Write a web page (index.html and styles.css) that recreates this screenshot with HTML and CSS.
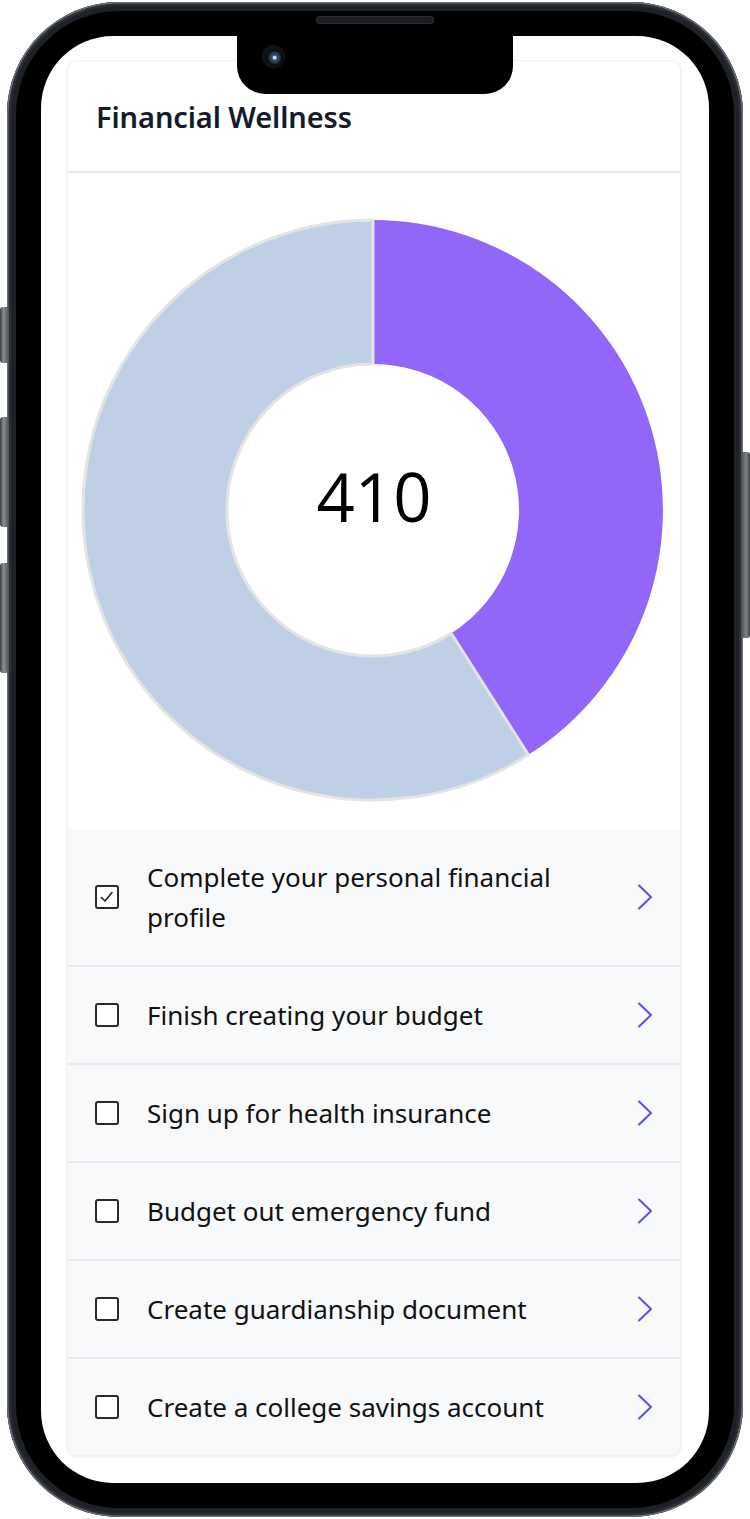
FILE: index.html
```html
<!DOCTYPE html>
<html lang="en">
<head>
<meta charset="utf-8">
<title>Financial Wellness</title>
<link rel="stylesheet" href="styles.css">
</head>
<body>
<div class="phone">
  <span class="btn btn-l1"></span>
  <span class="btn btn-l2"></span>
  <span class="btn btn-l3"></span>
  <span class="btn btn-r1"></span>
  <span class="speaker"></span>
  <div class="bezel">
    <div class="screen">
      <div class="notch"><span class="camera"></span></div>
      <div class="card">
        <div class="card-header">
          <h1 class="title">Financial Wellness</h1>
        </div>
        <div class="chart">
          <svg class="donut" width="614" height="654" viewBox="0 0 614 654">
            <path class="seg-done" d="M 305 47 A 290 290 0 0 1 460.4 581.8 L 383.2 460.3 A 146 146 0 0 0 305 191 Z"/>
            <path class="seg-rest" d="M 460.4 581.8 A 290 290 0 1 1 305 47 L 305 191 A 146 146 0 1 0 383.2 460.3 Z"/>
          </svg>
          <div class="score">410</div>
        </div>
        <ul class="tasks">
          <li class="task">
            <span class="box checked"><svg width="20" height="20" viewBox="0 0 20 20"><polyline points="4.5,10.5 8,14 15,5.5"/></svg></span>
            <span class="label">Complete your personal financial profile</span>
            <svg class="chev" width="16" height="26" viewBox="0 0 16 26"><polyline points="2,1.5 14,13 2,24.5"/></svg>
          </li>
          <li class="task">
            <span class="box"></span>
            <span class="label">Finish creating your budget</span>
            <svg class="chev" width="16" height="26" viewBox="0 0 16 26"><polyline points="2,1.5 14,13 2,24.5"/></svg>
          </li>
          <li class="task">
            <span class="box"></span>
            <span class="label">Sign up for health insurance</span>
            <svg class="chev" width="16" height="26" viewBox="0 0 16 26"><polyline points="2,1.5 14,13 2,24.5"/></svg>
          </li>
          <li class="task">
            <span class="box"></span>
            <span class="label">Budget out emergency fund</span>
            <svg class="chev" width="16" height="26" viewBox="0 0 16 26"><polyline points="2,1.5 14,13 2,24.5"/></svg>
          </li>
          <li class="task">
            <span class="box"></span>
            <span class="label">Create guardianship document</span>
            <svg class="chev" width="16" height="26" viewBox="0 0 16 26"><polyline points="2,1.5 14,13 2,24.5"/></svg>
          </li>
          <li class="task">
            <span class="box"></span>
            <span class="label">Create a college savings account</span>
            <svg class="chev" width="16" height="26" viewBox="0 0 16 26"><polyline points="2,1.5 14,13 2,24.5"/></svg>
          </li>
        </ul>
      </div>
    </div>
  </div>
</div>
</body>
</html>
```

FILE: styles.css
```css
* { box-sizing: border-box; }

html, body {
  margin: 0;
  padding: 0;
  background: #ffffff;
}

body {
  width: 750px;
  height: 1519px;
  overflow: hidden;
  font-family: "Noto Sans", "DejaVu Sans", sans-serif;
}

.phone {
  position: relative;
  margin: 2px 0 0 7px;
  width: 736px;
  height: 1515px;
  padding: 9px;
  border-radius: 112px;
  background: #1e2227;
  box-shadow: inset 0 0 0 1.5px #6d7075, inset 0 0 0 4px #2b2f35;
}

.btn {
  position: absolute;
  width: 9px;
  background: linear-gradient(90deg, #3a3d42, #8a8d91 40%, #4a4d52);
  border-radius: 3px;
}
.btn-l1 { left: -7px; top: 305px; height: 56px; }
.btn-l2 { left: -7px; top: 415px; height: 110px; }
.btn-l3 { left: -7px; top: 561px; height: 110px; }
.btn-r1 { left: 734px; top: 450px; height: 186px; width: 9px;
  background: linear-gradient(90deg, #4a4d52, #7d8085 60%, #3a3d42); }

.speaker {
  position: absolute;
  left: 309px;
  top: 14px;
  width: 118px;
  height: 8px;
  border-radius: 4px;
  background: #1b1d21;
  box-shadow: inset 0 0 0 1px #2c2f34;
  z-index: 2;
}

.bezel {
  height: 100%;
  padding: 25px;
  border-radius: 103px;
  background: #000000;
}

.screen {
  position: relative;
  height: 100%;
  border-radius: 72px;
  background: #ffffff;
  overflow: hidden;
  padding: 24px 28px 0 26px;
}

.notch {
  position: absolute;
  top: 0;
  left: 196px;
  width: 276px;
  height: 58px;
  background: #000;
  border-radius: 0 0 28px 28px;
  z-index: 3;
}

.camera {
  position: absolute;
  left: 25px;
  top: 9px;
  width: 23px;
  height: 23px;
  border-radius: 50%;
  background: radial-gradient(circle at 55% 55%, #c9d6ee 0 1.5px, #2a4b78 2.5px, #27403a 5px, #0b0e12 7px, #111317 11.5px);
}

.card {
  background: #ffffff;
  border: 1px solid #f0f1f3;
  border-radius: 10px;
  box-shadow: 0 1px 3px rgba(0, 0, 0, 0.08);
  overflow: hidden;
}

.card-header {
  height: 112px;
  padding: 38px 28px 0 28px;
  border-bottom: 2px solid #e7e8ec;
}

.title {
  margin: 0;
  font-size: 29px;
  line-height: 36px;
  font-weight: 600;
  color: #131a2a;
  letter-spacing: -0.1px;
}

.chart {
  position: relative;
  height: 656px;
}

.donut {
  display: block;
}

.seg-done {
  fill: #9166f8;
}

.seg-rest {
  fill: #bfd0e6;
  stroke: #e4e4e4;
  stroke-width: 3;
  stroke-linejoin: round;
}

.score {
  position: absolute;
  left: 0;
  right: 0;
  top: 278px;
  text-align: center;
  font-family: "Open Sans", "Noto Sans", sans-serif;
  font-size: 67px;
  line-height: 90px;
  color: #000;
}

.tasks {
  list-style: none;
  margin: 0;
  padding: 0;
  background: #f8f9fb;
}

.task {
  display: flex;
  align-items: center;
  padding: 28px 27px 28px 27px;
  border-bottom: 2px solid #e8eaee;
}

.task:last-child {
  border-bottom: none;
}

.box {
  flex: 0 0 24px;
  width: 24px;
  height: 24px;
  border: 2px solid #2a2a2a;
  border-radius: 3px;
  display: flex;
  align-items: center;
  justify-content: center;
  background: #fff;
}

.box svg polyline {
  fill: none;
  stroke: #222;
  stroke-width: 1.6;
  stroke-linecap: round;
  stroke-linejoin: round;
}

.label {
  flex: 1;
  margin-left: 28px;
  font-size: 26px;
  line-height: 40px;
  color: #111111;
  padding-right: 30px;
}

.chev {
  flex: 0 0 16px;
}

.chev polyline {
  fill: none;
  stroke: #5a50ea;
  stroke-width: 2;
  stroke-linecap: round;
  stroke-linejoin: round;
}
```
